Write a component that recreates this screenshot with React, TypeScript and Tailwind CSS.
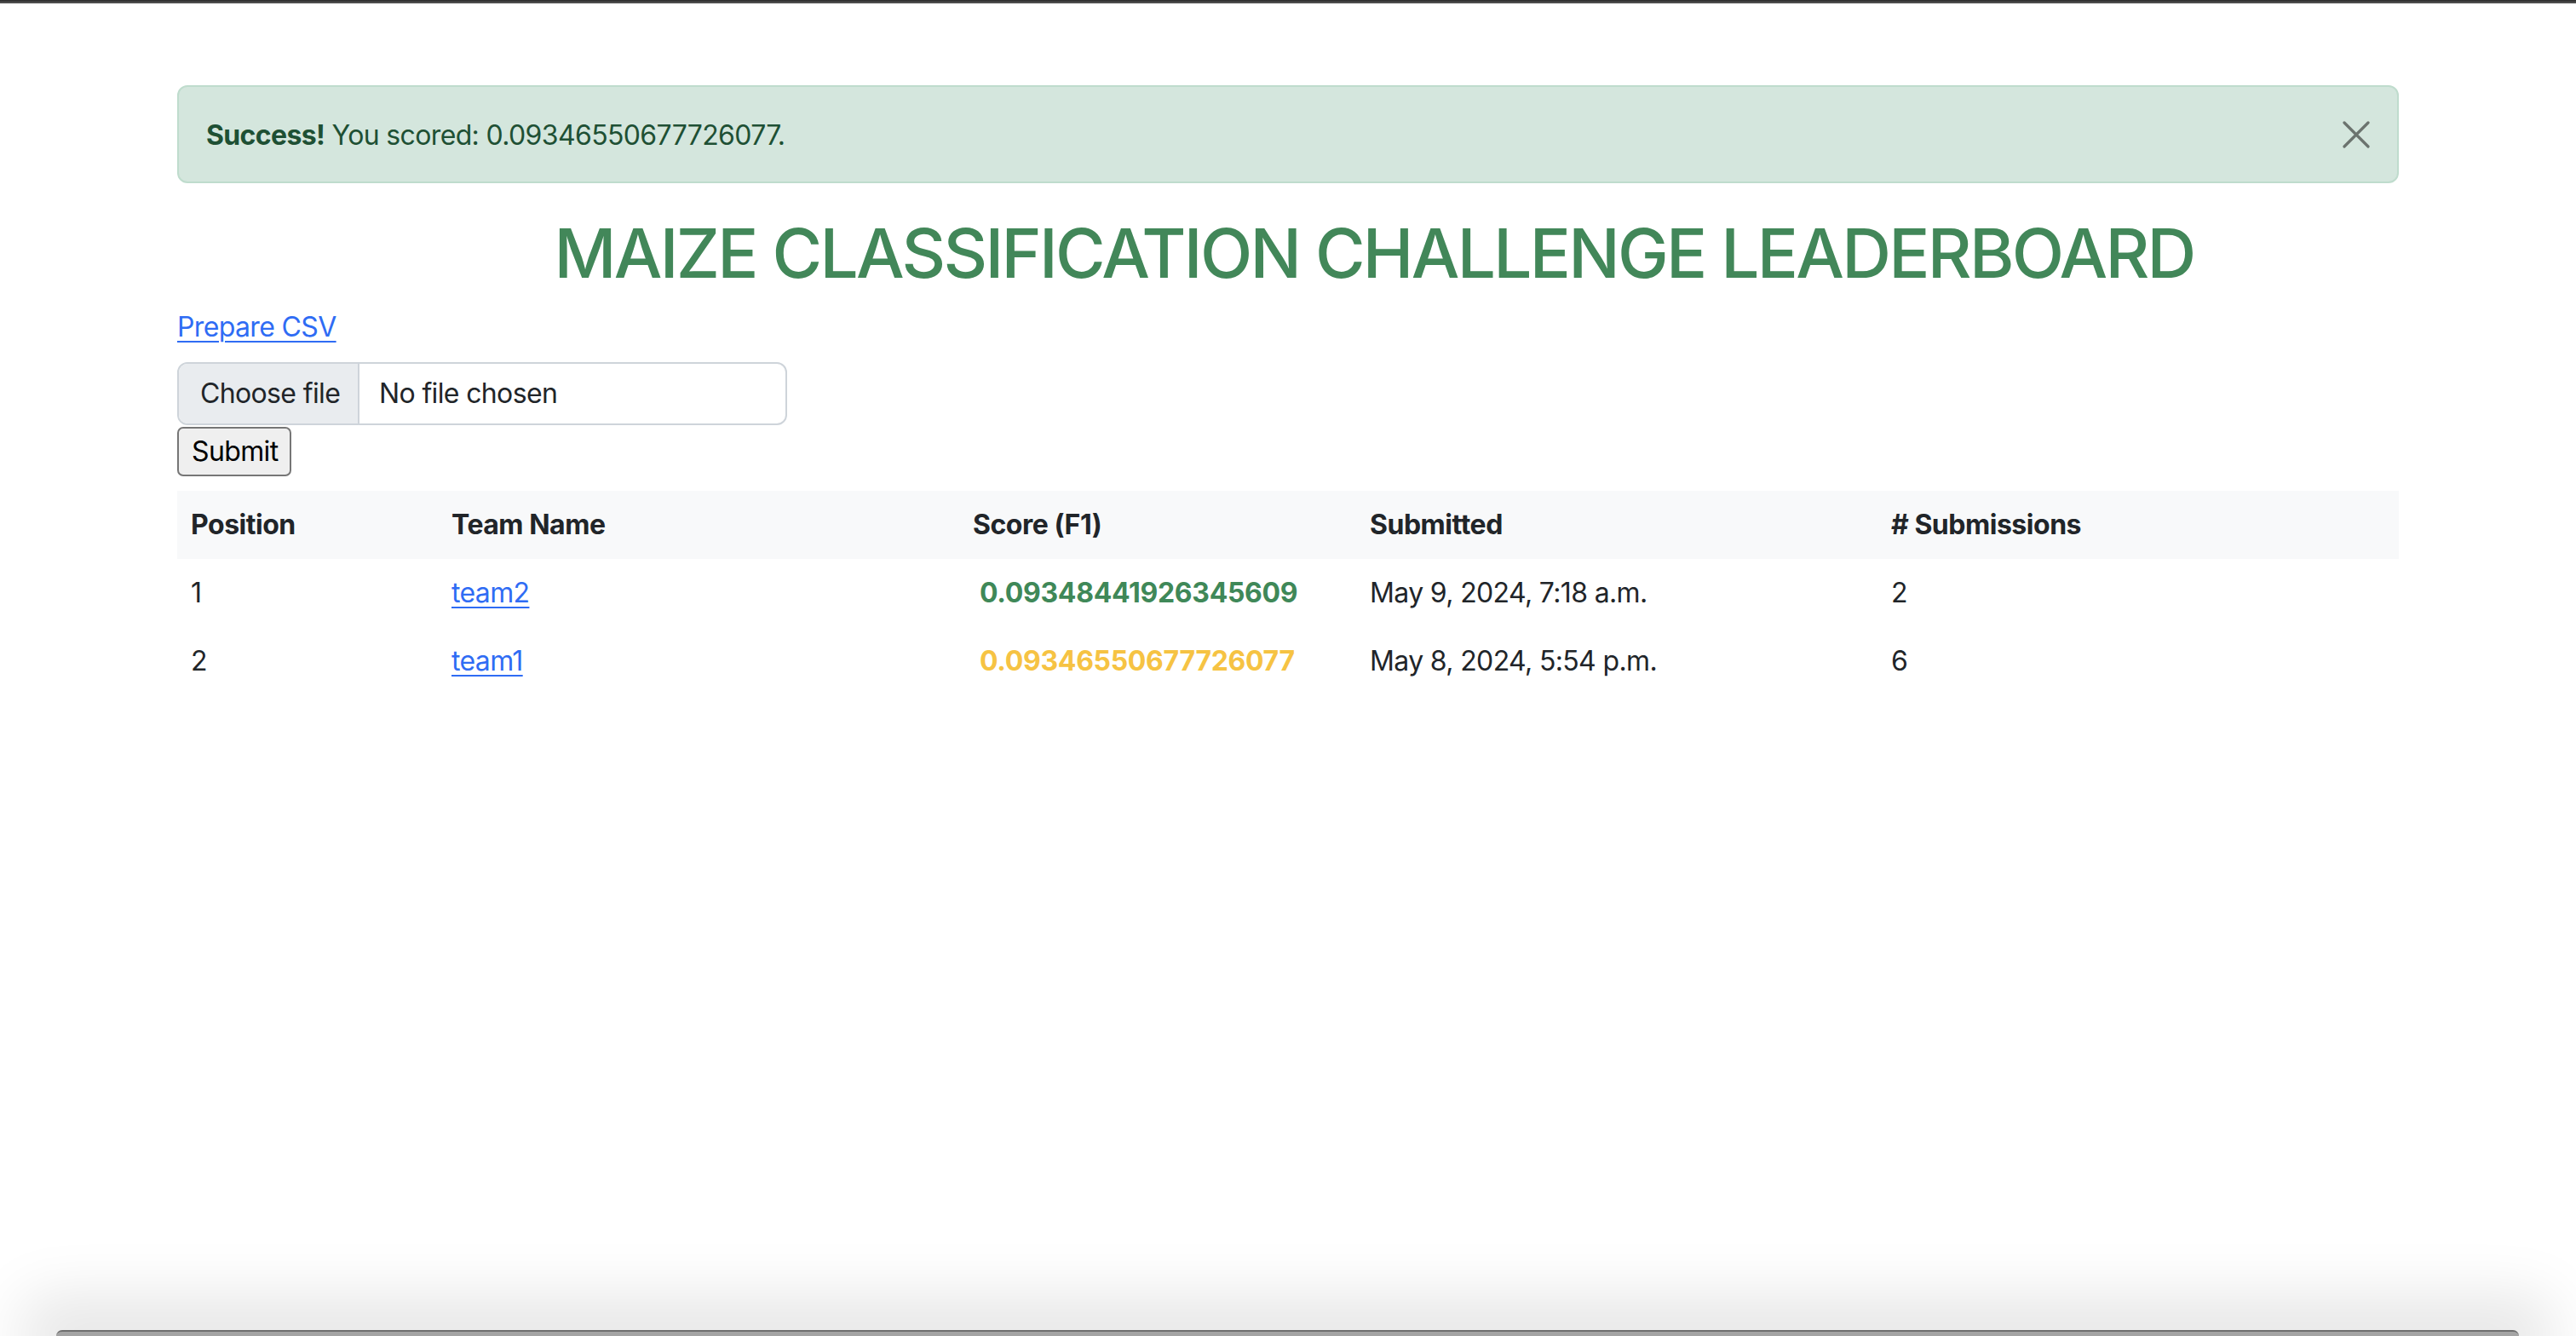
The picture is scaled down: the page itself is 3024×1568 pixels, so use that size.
import React from "react";

const rows = [
  { pos: "1", team: "team2", score: "0.09348441926345609", color: "text-[#3f8858]", date: "May 9, 2024, 7:18 a.m.", subs: "2" },
  { pos: "2", team: "team1", score: "0.09346550677726077", color: "text-[#f6c343]", date: "May 8, 2024, 5:54 p.m.", subs: "6" },
];

const cols = "grid grid-cols-[306px_612px_466px_612px_612px]";

export default function App() {
  return (
    <div className="relative h-[1568px] w-[3024px] overflow-hidden bg-white text-[#212529] font-['Inter','Liberation_Sans',sans-serif] text-[32px] leading-[48px] tracking-[-0.02em]">
      <div className="h-[4px] bg-gradient-to-b from-[#2a2a2a] to-[#5a5a5a]" />
      <div className="px-[208px]">
        {/* Alert */}
        <div className="mt-[96px] flex h-[115px] items-center justify-between rounded-[12px] border-2 border-[#bfdccd] bg-[#d4e6dd] pl-[32px] pr-[32px] text-[#1e5034]">
          <div className="whitespace-nowrap pt-[2px]">
            <span className="font-bold">Success!</span> You scored: 0.09346550677726077.
          </div>
          <svg width="32" height="32" viewBox="0 0 32 32" className="shrink-0">
            <path d="M2 2 L30 30 M30 2 L2 30" stroke="#6b736e" strokeWidth="3.2" strokeLinecap="round" />
          </svg>
        </div>

        {/* Title */}
        <h1 className="mt-[34px] pl-[202px] text-center text-[80px] font-medium leading-[96px] tracking-[-0.034em] text-[#428759] whitespace-nowrap">
          MAIZE CLASSIFICATION CHALLENGE LEADERBOARD
        </h1>

        <div className="mt-[15px]">
          <a href="#" className="text-[#2f6cf4] underline decoration-2 underline-offset-[5px]">
            Prepare CSV
          </a>
        </div>

        {/* File input */}
        <div className="mt-[17px] flex h-[74px] w-[716px] overflow-hidden rounded-[12px] border-2 border-[#ced4da]">
          <div className="flex h-full w-[212px] shrink-0 items-center whitespace-nowrap border-r-2 border-[#ced4da] bg-[#e9ecef] pl-[25px]">
            Choose file
          </div>
          <div className="flex h-full items-center whitespace-nowrap pl-[23px]">No file chosen</div>
        </div>

        {/* Submit */}
        <button className="mt-[2px] flex h-[58px] w-[134px] items-center rounded-[7px] border-2 border-[#767676] bg-[#efefef] pl-[15px] text-[32px] text-black">
          Submit
        </button>

        {/* Table */}
        <div className="mt-[17px]">
          <div className={`${cols} h-[80px] items-center bg-[#f8f9fa] font-bold tracking-[-0.015em]`}>
            <div className="px-[16px]">Position</div>
            <div className="px-[16px]">Team Name</div>
            <div className="px-[16px]">Score (F1)</div>
            <div className="px-[16px]">Submitted</div>
            <div className="px-[16px]"># Submissions</div>
          </div>
          {rows.map((r) => (
            <div key={r.pos} className={`${cols} h-[80px] items-center`}>
              <div className="px-[16px]">{r.pos}</div>
              <div className="px-[16px]">
                <a href="#" className="text-[#2f6cf4] underline decoration-2 underline-offset-[5px]">
                  {r.team}
                </a>
              </div>
              <div className={`px-[16px] font-bold tracking-[-0.01em] ${r.color}`}>
                <span className="ml-[8px]">{r.score}</span>
              </div>
              <div className="px-[16px]">{r.date}</div>
              <div className="px-[16px]">{r.subs}</div>
            </div>
          ))}
        </div>
      </div>

      {/* bottom window decoration */}
      <div className="absolute bottom-0 left-[66px] right-[67px] h-[7px] rounded-t-[14px] border-t-2 border-[#6e6e6e] bg-[#a4a4a4] shadow-[0_0_70px_40px_rgba(0,0,0,0.10)]" />
    </div>
  );
}
